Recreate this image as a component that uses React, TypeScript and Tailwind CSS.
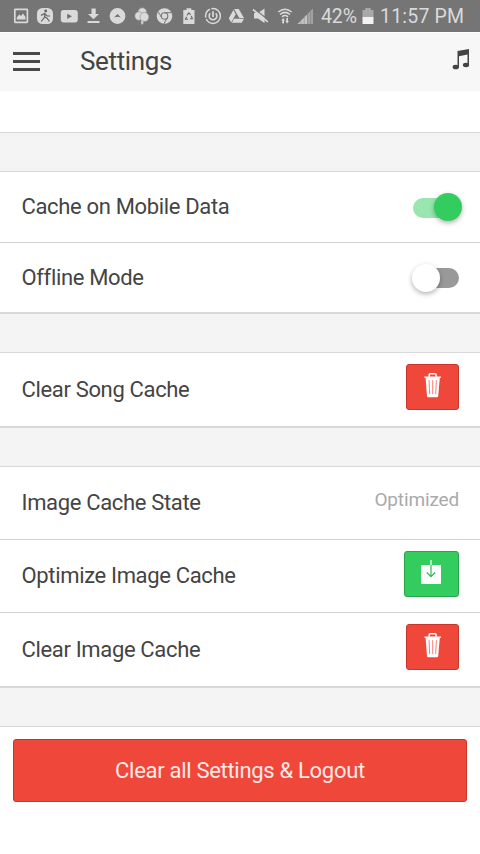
import React from 'react';

const ICON = 'h-[18px] shrink-0';

const StatusBar = () => (
  <div className="flex h-8 items-center bg-[#757575] pl-[13px] text-[#dadada]">
    {/* Gallery */}
    <svg className={`${ICON} w-4`} viewBox="0 0 16 18">
      <rect x="1.8" y="2.3" width="12.6" height="13" rx="0.5" fill="none" stroke="currentColor" strokeWidth="1.7" />
      <path d="M3.8 12.5V10.5L6.3 7.5L8 9L10 6.5L12.5 10V12.5Z" fill="currentColor" />
    </svg>
    {/* Fitness */}
    <svg className={`${ICON} ml-[7px] w-[18px]`} viewBox="0 0 18 18">
      <rect x="1" y="1" width="16" height="16" rx="5.5" fill="currentColor" />
      <circle cx="9.7" cy="4" r="1.4" fill="#666" />
      <path d="M9 6.3L8.5 10.3L5.2 14.5M8.8 10L11.2 11.4L13.5 14.5M5 8.4L8.7 6.5L11 8.8L14 9" fill="none" stroke="#666" strokeWidth="1.2" />
    </svg>
    {/* YouTube */}
    <svg className={`${ICON} ml-[6px] w-[18px]`} viewBox="0 0 18 18">
      <rect x="0.8" y="3" width="17" height="12.5" rx="3" fill="currentColor" />
      <path d="M7.2 6.7V12L12 9.3Z" fill="#707070" />
    </svg>
    {/* Download */}
    <svg className={`${ICON} ml-[8px] w-[15px]`} viewBox="0 0 15 18">
      <path d="M5.5 1.5H9.7V7H13L7.5 12.3L2 7H5.5ZM1.5 14H13.5V16H1.5Z" fill="currentColor" />
    </svg>
    {/* Circle */}
    <svg className={`${ICON} ml-[8px] w-[17px]`} viewBox="0 0 17 18">
      <circle cx="8.5" cy="9" r="7.9" fill="currentColor" />
      <path d="M5.2 10.4L8.5 7L11.8 10.4Q8.5 8.9 5.2 10.4Z" fill="#6b6b6b" />
    </svg>
    {/* Balloons */}
    <svg className={`${ICON} ml-[8px] w-4`} viewBox="0 0 16 18">
      <g fill="currentColor" stroke="#8c8c8c" strokeWidth="0.6">
        <path d="M7 12L10 12L9.2 17.2H7Z" />
        <circle cx="8.3" cy="5" r="4.2" />
        <circle cx="5" cy="9" r="4.2" />
        <circle cx="10.4" cy="10" r="4.5" />
      </g>
    </svg>
    {/* Chrome */}
    <svg className={`${ICON} ml-[6px] w-[17px]`} viewBox="0 0 17 18">
      <circle cx="8.5" cy="9" r="7.8" fill="currentColor" />
      <circle cx="8.5" cy="9" r="3.3" fill="currentColor" stroke="#757575" strokeWidth="1.1" />
      <path d="M8.5 5.7H15.6M5.6 10.6L2.1 4.6M11.4 10.6L7.8 16.8" stroke="#757575" strokeWidth="1" />
    </svg>
    {/* Battery saver */}
    <svg className={`${ICON} ml-[9px] w-[14px]`} viewBox="0 0 14 18">
      <path d="M1.3 3H4.5V1.2H9.3V3H12.5V17H1.3Z" fill="currentColor" />
      <path d="M4.9 8.4L6.9 5.8L8.8 8M9.3 9L10.4 11.8H8M6 12.2H3.5L4.5 9.7" fill="none" stroke="#686868" strokeWidth="1.1" />
    </svg>
    {/* Timer */}
    <svg className={`${ICON} ml-[8px] w-[18px]`} viewBox="0 0 18 18">
      <circle cx="9" cy="9" r="7.4" fill="none" stroke="currentColor" strokeWidth="1.5" strokeDasharray="20 1.5 10 1.5" />
      <path d="M6.3 6.3A3.8 3.8 0 1 0 11.7 6.3M9 4.2V10" fill="none" stroke="currentColor" strokeWidth="1.7" />
    </svg>
    {/* Drive */}
    <svg className={`${ICON} ml-[6px] w-[17px]`} viewBox="0 0 17 18">
      <path d="M6.1 2H10.8L16 11H11.3ZM5.4 3L7.7 7.2L3.2 15.5L0.8 11.3ZM6 11.8H16L13.7 15.8H3.8Z" fill="currentColor" />
    </svg>
    {/* Muted */}
    <svg className={`${ICON} ml-[7px] w-[17px]`} viewBox="0 0 17 18">
      <path d="M2 6H6L12.5 1.5V16L6 11.5H2Z" fill="currentColor" />
      <path d="M3.5 2.7L16 12.7" stroke="#757575" strokeWidth="1.2" />
      <path d="M1 2.5L15.8 14.8" stroke="currentColor" strokeWidth="1.7" />
    </svg>
    {/* Wi-Fi */}
    <svg className={`${ICON} ml-[8px] w-4`} viewBox="0 0 16 18">
      <path d="M1.3 5Q8 -0.5 14.7 5M3 7.5Q8 3.3 13 7.5M5 9.8Q8 7.3 11 9.8" fill="none" stroke="currentColor" strokeWidth="1.5" />
      <path d="M4.3 13.5L6.2 11L8 13.5H7V16.5H5.3V13.5ZM8.3 14H9.3V11H11V14H12L10.2 16.5Z" fill="currentColor" />
    </svg>
    {/* Signal */}
    <svg className={`${ICON} ml-[4px] w-[17px]`} viewBox="0 0 17 18">
      <path d="M0.5 17L10.5 7V17Z" fill="#c6c6c6" />
      <path d="M10.5 7L16 1.5V17H10.5Z" fill="#a3a3a3" />
      <path d="M3.8 10V17M7.2 8V17M10.5 5V17M13.6 2V17" stroke="#858585" strokeWidth="0.6" />
    </svg>
    <span className="relative top-px ml-[7px] w-[38px] text-[19.5px] leading-8 tracking-[-0.1px] whitespace-nowrap">42%</span>
    {/* Battery */}
    <svg className={`${ICON} ml-[3px] w-3`} viewBox="0 0 12 18">
      <path d="M0.5 3H3.3V1H8.7V3H11.5V10H0.5Z" fill="#a9a9a9" />
      <path d="M0.5 10H11.5V17H0.5Z" fill="#f3f3f3" />
    </svg>
    <span className="relative top-px ml-[6px] text-[19.5px] leading-8 tracking-[0.2px] whitespace-nowrap">11:57 PM</span>
  </div>
);

const Header = () => (
  <header className="flex h-[59px] items-center border-t border-white bg-[#f7f7f7] pr-[10px] pl-[13px]">
    <button title="Menu" className="-mt-px flex w-[27px] flex-col gap-[5.5px]">
      <span className="h-[2.5px] bg-[#4a4a4a]" />
      <span className="h-[2.5px] bg-[#4a4a4a]" />
      <span className="h-[2.5px] bg-[#4a4a4a]" />
    </button>
    <h1 className="-mt-[2px] ml-10 flex-1 text-[26px] leading-8 tracking-[-0.35px] text-[#444]">Settings</h1>
    <svg className="mb-[5px] h-[21px] w-[18px]" viewBox="0 0 18 21">
      <path d="M5.5 2.1L17 0V16H15.5V5.5L7 7.3V18H5.5Z" fill="#444" />
      <ellipse cx="3.8" cy="18" rx="3.2" ry="2.3" fill="#444" />
      <ellipse cx="14" cy="16" rx="3.1" ry="2.2" fill="#444" />
    </svg>
  </header>
);

const TrashIcon = () => (
  <svg className="h-[25px] w-5" viewBox="0 0 20 26" preserveAspectRatio="none">
    <path d="M6.2 4V1.8Q6.2 0.8 7.2 0.8H12.1Q13.1 0.8 13.1 1.8V4" fill="none" stroke="white" strokeWidth="1.5" />
    <path d="M1.3 3.6H18V5H16.8L15.2 24.2Q15.1 25.2 14 25.2H5.2Q4.1 25.2 4 24.2L2.6 5H1.3Z" fill="white" />
    <path d="M6 7.5L6.7 22M9.7 7.5V22M13.4 7.5L12.7 22" stroke="#ef473a" strokeOpacity="0.7" strokeWidth="1" />
  </svg>
);

const TrashButton = ({ title }: { title: string }) => (
  <button title={title} className="mb-[5px] flex h-[46px] w-[53px] justify-center rounded-[3px] border border-[#c9342b] bg-[#ef473a] pt-2">
    <TrashIcon />
  </button>
);

const Row = ({ label, className, children }: { label: string; className: string; children: React.ReactNode }) => (
  <div className={`flex items-center justify-between pr-[21px] pl-[21.5px] ${className}`}>
    <span className="text-[22px] leading-7 tracking-[-0.34px] whitespace-nowrap">{label}</span>
    {children}
  </div>
);

const Divider = ({ className }: { className: string }) => (
  <div className={`border-y border-[#d8d8d8] bg-[#f4f4f4] ${className}`} />
);

export default function App() {
  return (
    <div className="h-[854px] w-[480px] overflow-hidden bg-white font-['Roboto',sans-serif] text-[#444]">
      <StatusBar />
      <Header />
      <div className="h-[41px]" />
      <Divider className="h-10" />

      <Row label="Cache on Mobile Data" className="h-[70px]">
        <div className="relative -right-[3px] flex h-7 w-[49px] items-center justify-end">
          <span className="absolute top-[5px] left-0 h-5 w-10 rounded-full bg-[#99e6b1]" />
          <span className="relative size-7 rounded-full bg-[#33cd5f] shadow-[0_2px_5px_rgba(0,0,0,0.3)]" />
        </div>
      </Row>
      <Row label="Offline Mode" className="h-[70px] border-t border-[#d0d0d0]">
        <div className="relative flex h-7 w-[47px] items-center">
          <span className="absolute top-[4px] right-0 h-5 w-10 rounded-full bg-[#999]" />
          <span className="relative size-7 rounded-full bg-white shadow-[0_2px_5px_rgba(0,0,0,0.3)]" />
        </div>
      </Row>
      <Divider className="h-[41px] border-t-2" />

      <Row label="Clear Song Cache" className="h-[73px]">
        <TrashButton title="Clear Song Cache" />
      </Row>
      <Divider className="h-[41px] border-t-2" />

      <Row label="Image Cache State" className="h-[72px]">
        <span className="relative -top-[3px] text-[19px] tracking-[-0.15px] text-[#aaa]">Optimized</span>
      </Row>
      <Row label="Optimize Image Cache" className="h-[73px] border-t border-[#d0d0d0]">
        <button title="Optimize Image Cache" className="mb-[5px] flex h-[46px] w-[55px] justify-center rounded-[3px] border border-[#28a54c] bg-[#33cd5f] pt-2 pr-px">
          <svg className="h-[26px] w-[22px]" viewBox="0 0 22 26">
            <rect x="1" y="5" width="20" height="19" fill="white" />
            <path d="M11 0V5" stroke="white" strokeWidth="1.2" />
            <path d="M11 5V16.5M6.8 12.5L11 16.7L15.2 12.5" fill="none" stroke="#33b95a" strokeWidth="1.2" />
          </svg>
        </button>
      </Row>
      <Row label="Clear Image Cache" className="h-[74px] border-t border-[#d0d0d0]">
        <TrashButton title="Clear Image Cache" />
      </Row>
      <Divider className="h-[41px] border-t-2" />

      <div className="px-[13px] pt-3">
        <button className="h-[63px] w-full rounded-[3px] border border-[#c9342b] bg-[#ef473a] text-[22px] tracking-[-0.3px] text-[#ffeae6]">
          Clear all Settings &amp; Logout
        </button>
      </div>
    </div>
  );
}
